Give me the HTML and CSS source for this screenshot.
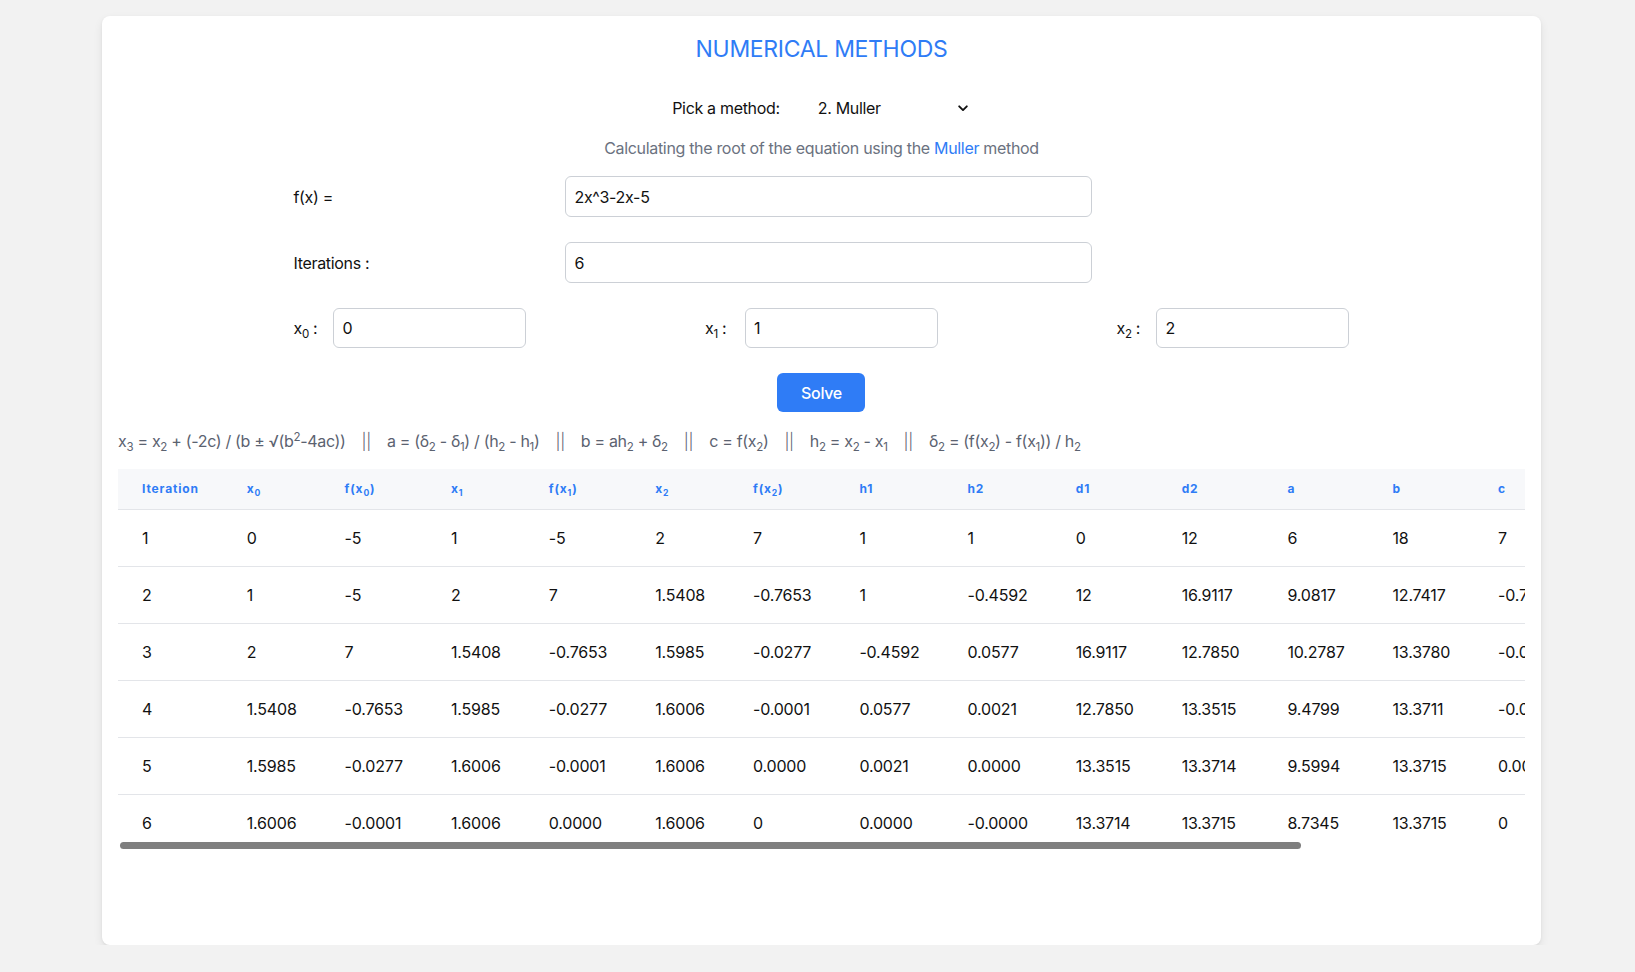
FILE: index.html
```html
<!DOCTYPE html>
<html lang="en">
<head>
<meta charset="utf-8">
<title>Numerical Methods</title>
<link rel="stylesheet" href="styles.css">
</head>
<body>
<div class="card">
  <h1 class="title">NUMERICAL METHODS</h1>

  <div class="pick-row">
    <label class="pick-label" for="method">Pick a method:</label>
    <div class="select-wrap">
      <select id="method" class="method-select">
        <option>1. Bisection</option>
        <option selected>2. Muller</option>
        <option>3. Newton</option>
      </select>
      <svg class="chevron" width="10" height="7" viewBox="0 0 10 7"><path d="M1.2 1.3 L5 5.1 L8.8 1.3" fill="none" stroke="#111" stroke-width="1.9" stroke-linecap="round" stroke-linejoin="round"/></svg>
    </div>
  </div>

  <p class="subtitle">Calculating the root of the equation using the <span class="accent">Muller</span> method</p>

  <div class="form">
    <div class="form-row">
      <label class="row-label">f(x) =</label>
      <input class="field field-wide" type="text" value="2x^3-2x-5">
    </div>
    <div class="form-row">
      <label class="row-label">Iterations :</label>
      <input class="field field-wide" type="text" value="6">
    </div>
    <div class="form-row points">
      <div class="point">
        <label class="point-label">x<sub>0</sub> :</label>
        <input class="field field-small" type="text" value="0">
      </div>
      <div class="point">
        <label class="point-label">x<sub>1</sub> :</label>
        <input class="field field-small" type="text" value="1">
      </div>
      <div class="point">
        <label class="point-label">x<sub>2</sub> :</label>
        <input class="field field-small" type="text" value="2">
      </div>
    </div>
  </div>

  <div class="actions">
    <button class="solve" type="button">Solve</button>
  </div>

  <p class="formula">x<sub>3</sub> = x<sub>2</sub> + (-2c) / (b ± √(b<sup>2</sup>-4ac))<span class="sep">||</span>a = (δ<sub>2</sub> - δ<sub>1</sub>) / (h<sub>2</sub> - h<sub>1</sub>)<span class="sep">||</span>b = ah<sub>2</sub> + δ<sub>2</sub><span class="sep">||</span>c = f(x<sub>2</sub>)<span class="sep">||</span>h<sub>2</sub> = x<sub>2</sub> - x<sub>1</sub><span class="sep">||</span>δ<sub>2</sub> = (f(x<sub>2</sub>) - f(x<sub>1</sub>)) / h<sub>2</sub></p>

  <div class="table-frame">
    <div class="table-scroll">
      <table class="results">
        <thead>
          <tr>
            <th>Iteration</th><th>x<sub>0</sub></th><th>f(x<sub>0</sub>)</th><th>x<sub>1</sub></th><th>f(x<sub>1</sub>)</th><th>x<sub>2</sub></th><th>f(x<sub>2</sub>)</th><th>h1</th><th>h2</th><th>d1</th><th>d2</th><th>a</th><th>b</th><th>c</th>
          </tr>
        </thead>
        <tbody>
          <tr><td>1</td><td>0</td><td>-5</td><td>1</td><td>-5</td><td>2</td><td>7</td><td>1</td><td>1</td><td>0</td><td>12</td><td>6</td><td>18</td><td>7</td></tr>
          <tr><td>2</td><td>1</td><td>-5</td><td>2</td><td>7</td><td>1.5408</td><td>-0.7653</td><td>1</td><td>-0.4592</td><td>12</td><td>16.9117</td><td>9.0817</td><td>12.7417</td><td>-0.7653</td></tr>
          <tr><td>3</td><td>2</td><td>7</td><td>1.5408</td><td>-0.7653</td><td>1.5985</td><td>-0.0277</td><td>-0.4592</td><td>0.0577</td><td>16.9117</td><td>12.7850</td><td>10.2787</td><td>13.3780</td><td>-0.0277</td></tr>
          <tr><td>4</td><td>1.5408</td><td>-0.7653</td><td>1.5985</td><td>-0.0277</td><td>1.6006</td><td>-0.0001</td><td>0.0577</td><td>0.0021</td><td>12.7850</td><td>13.3515</td><td>9.4799</td><td>13.3711</td><td>-0.0001</td></tr>
          <tr><td>5</td><td>1.5985</td><td>-0.0277</td><td>1.6006</td><td>-0.0001</td><td>1.6006</td><td>0.0000</td><td>0.0021</td><td>0.0000</td><td>13.3515</td><td>13.3714</td><td>9.5994</td><td>13.3715</td><td>0.0000</td></tr>
          <tr class="last"><td>6</td><td>1.6006</td><td>-0.0001</td><td>1.6006</td><td>0.0000</td><td>1.6006</td><td>0</td><td>0.0000</td><td>-0.0000</td><td>13.3714</td><td>13.3715</td><td>8.7345</td><td>13.3715</td><td>0</td></tr>
        </tbody>
      </table>
    </div>
    <div class="scroll-thumb"></div>
  </div>
</div>
</body>
</html>
```
FILE: styles.css
```css
* { box-sizing: border-box; }

html, body {
  margin: 0;
  padding: 0;
}

body {
  background: #f2f2f2;
  font-family: Inter, "Noto Sans", "Liberation Sans", sans-serif;
  color: #111;
  font-size: 16px;
  letter-spacing: -0.02em;
}

.card {
  width: 88%;
  margin: 16px 0 0 calc(6% + 4px);
  height: 929px;
  background: #fff;
  border-radius: 8px;
  box-shadow: 0 4px 10px rgba(0, 0, 0, 0.08), 0 1px 3px rgba(0, 0, 0, 0.05);
  padding: 16px;
}

.title {
  margin: 0;
  text-align: center;
  font-size: 23px;
  line-height: 34px;
  font-weight: 400;
  color: #2f7cf6;
}

.pick-row {
  margin-top: 23px;
  display: flex;
  justify-content: center;
  align-items: center;
  gap: 29px;
  height: 38px;
  padding-left: 5px;
}

.pick-label {
  font-size: 16px;
}

.select-wrap {
  position: relative;
  width: 167px;
}

.method-select {
  appearance: none;
  -webkit-appearance: none;
  width: 100%;
  border: none;
  background: transparent;
  font: inherit;
  font-size: 16px;
  letter-spacing: -0.02em;
  color: #111;
  padding: 6px 9px;
  outline: none;
}

.chevron {
  position: absolute;
  right: 8px;
  top: 50%;
  margin-top: -3px;
  pointer-events: none;
}

.subtitle {
  margin: 9px 0 0;
  text-align: center;
  line-height: 24px;
  color: #6b7280;
}

.accent {
  color: #2f7cf6;
}

.form {
  width: 1056px;
  margin: 16px auto 0;
  display: flex;
  flex-direction: column;
  gap: 25px;
}

.form-row {
  display: flex;
  align-items: center;
}

.row-label {
  width: 272px;
}

.field {
  height: 41px;
  border: 1px solid #ccd0d6;
  border-radius: 6px;
  font: inherit;
  font-size: 16px;
  letter-spacing: -0.02em;
  color: #111;
  padding: 0 8px;
  outline: none;
  background: #fff;
}

.field-wide {
  width: 527px;
}

.points {
  justify-content: space-between;
}

.point {
  display: flex;
  align-items: center;
}

.point-label {
  width: 40px;
}

.point-label sub,
.formula sub,
.results sub {
  font-size: 0.72em;
  line-height: 0;
}

.field-small {
  width: 193px;
  height: 40px;
}

.actions {
  display: flex;
  justify-content: center;
  margin-top: 25px;
}

.solve {
  width: 88px;
  height: 39px;
  background: #2f7cf6;
  color: #fff;
  border: none;
  border-radius: 6px;
  font: inherit;
  font-size: 16px;
  font-weight: 500;
  letter-spacing: -0.02em;
}

.formula {
  margin: 17px 0 0;
  line-height: 24px;
  color: #5b6270;
  white-space: nowrap;
  letter-spacing: -0.02em;
}

.formula sup {
  font-size: 0.72em;
  line-height: 0;
}

.sep {
  padding: 0 16px;
  font-weight: 300;
}

.table-frame {
  position: relative;
  margin-top: 16px;
}

.table-scroll {
  overflow-x: auto;
  scrollbar-width: none;
}

.table-scroll::-webkit-scrollbar {
  display: none;
}

.scroll-thumb {
  position: absolute;
  left: 2px;
  bottom: 2px;
  width: 1181px;
  height: 7px;
  border-radius: 4px;
  background: #7f7f7f;
}

.results {
  border-collapse: collapse;
  white-space: nowrap;
}

.results th {
  background: #f7f8fa;
  color: #2f7cf6;
  font-size: 12px;
  font-weight: 700;
  letter-spacing: 0.07em;
  text-align: left;
  height: 40px;
  padding: 0 24px;
  border-bottom: 1px solid #e3e5e9;
}

.results td {
  height: 57px;
  padding: 0 24px;
  text-align: left;
  letter-spacing: -0.012em;
  border-bottom: 1px solid #e3e5e9;
}

.results tr.last td {
  border-bottom: none;
  height: 57px;
}
```
